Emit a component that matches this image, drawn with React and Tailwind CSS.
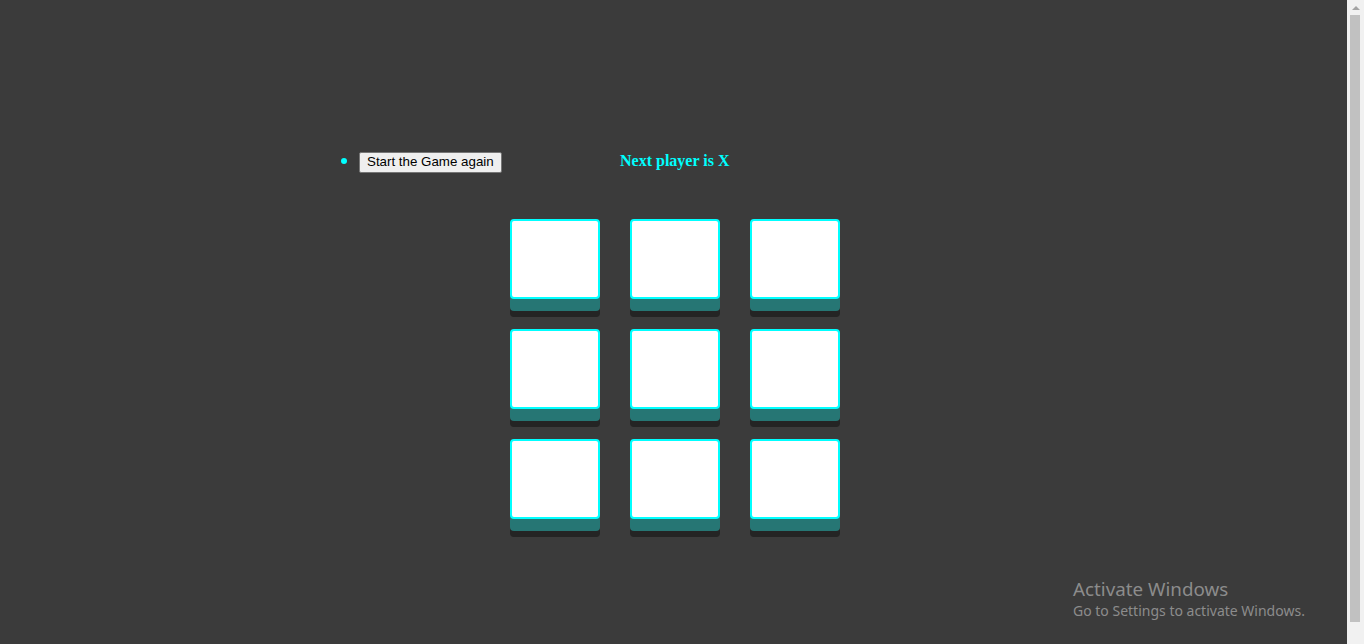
import React, { useState } from 'react';

function Square({ value, onClick }) {
  return (
    <button
      onClick={onClick}
      className="w-[90px] h-[80px] bg-white border-2 border-[#00ffff] rounded-[4px] shadow-[0_12px_0_#267674,0_18px_0_#242424] text-[#267674] text-4xl font-bold"
      style={{ fontFamily: '"Liberation Sans", sans-serif' }}
    >
      {value}
    </button>
  );
}

export default function App() {
  const [squares, setSquares] = useState(Array(9).fill(null));
  const [xNext, setXNext] = useState(true);

  const play = (i) => {
    if (squares[i]) return;
    const next = squares.slice();
    next[i] = xNext ? 'X' : 'O';
    setSquares(next);
    setXNext(!xNext);
  };

  const reset = () => { setSquares(Array(9).fill(null)); setXNext(true); };

  return (
    <div className="h-[644px] w-full flex bg-[#3b3b3b] overflow-hidden relative">
      <main className="flex-1 pt-[150px] pl-[319px] flex flex-col items-start">
        {/* STATUS ROW */}
        <div className="flex items-center h-[21px]">
          <ul className="w-[301px] pl-10 list-disc marker:text-[#00ffff] text-[#00ffff]">
            <li>
              <button
                onClick={reset}
                className="h-[21px] px-[7px] bg-[#efefef] border border-[#767676] rounded-[2px] text-black text-[13.33px] leading-none"
                style={{ fontFamily: '"Liberation Sans", Arial, sans-serif' }}
              >
                Start the Game again
              </button>
            </li>
          </ul>
          <h3
            className="text-[#00ffff] font-bold text-[16px] leading-none"
            style={{ fontFamily: '"Liberation Serif", "Times New Roman", serif' }}
          >
            Next player is {xNext ? 'X' : 'O'}
          </h3>
        </div>

        {/* BOARD */}
        <div className="mt-[48px] ml-[191px] grid grid-cols-3 gap-[30px]">
          {squares.map((v, i) => (
            <Square key={i} value={v} onClick={() => play(i)} />
          ))}
        </div>
      </main>

      {/* SCROLLBAR */}
      <div className="w-[17px] h-full bg-[#f1f1f1] flex flex-col items-center">
        <div className="h-[15px] w-full flex items-center justify-center">
          <div className="w-0 h-0 border-l-[4px] border-r-[4px] border-b-[4px] border-l-transparent border-r-transparent border-b-[#a3a3a3]" />
        </div>
        <div className="w-[10px] ml-[3px] mr-[1px] self-start h-[607px] bg-[#c1c1c1]" />
      </div>

      {/* WATERMARK */}
      <div
        className="absolute left-[1073px] top-[577px] text-[#8c8c8c] pointer-events-none"
        style={{ fontFamily: '"Noto Sans", "Open Sans", sans-serif' }}
      >
        <p className="text-[18.8px] leading-[24px]">Activate Windows</p>
        <p className="text-[14px] leading-[20px]">Go to Settings to activate Windows.</p>
      </div>
    </div>
  );
}
